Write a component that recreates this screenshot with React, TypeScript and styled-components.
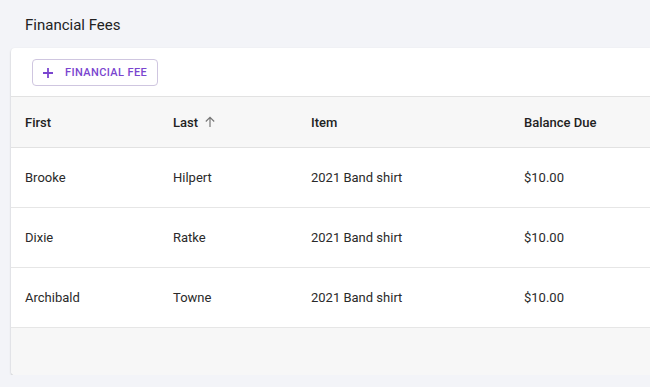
import styled, { createGlobalStyle } from "styled-components";

const rows = [
  { first: "Brooke", last: "Hilpert", item: "2021 Band shirt", due: "$10.00" },
  { first: "Dixie", last: "Ratke", item: "2021 Band shirt", due: "$10.00" },
  { first: "Archibald", last: "Towne", item: "2021 Band shirt", due: "$10.00" },
];

const GlobalStyle = createGlobalStyle`
  html, body {
    margin: 0;
    background: #f3f4f8;
    overflow: hidden;
  }
  body {
    font-family: Roboto, "Liberation Sans", sans-serif;
    color: #222;
  }
`;

export default function App() {
  return (
    <Page>
      <GlobalStyle />
      <Title>Financial Fees</Title>
      <Card>
        <Toolbar>
          <AddButton>
            <svg width="12" height="12" viewBox="0 0 12 12">
              <path d="M6 1v10M1 6h10" stroke="currentColor" strokeWidth="1.8" />
            </svg>
            Financial Fee
          </AddButton>
        </Toolbar>
        <HeaderRow>
          <Cell>First</Cell>
          <Cell>
            Last
            <svg width="12" height="12" viewBox="0 0 12 12">
              <path d="M6 11V1.5M1.8 5.5L6 1.3l4.2 4.2" stroke="#777" strokeWidth="1.2" fill="none" />
            </svg>
          </Cell>
          <Cell>Item</Cell>
          <Cell>Balance Due</Cell>
        </HeaderRow>
        {rows.map((r) => (
          <Row key={r.first}>
            <Cell>{r.first}</Cell>
            <Cell>{r.last}</Cell>
            <Cell>{r.item}</Cell>
            <Cell>{r.due}</Cell>
          </Row>
        ))}
        <Footer />
      </Card>
    </Page>
  );
}

const Page = styled.div`
  padding: 15px 0 0 11px;
`;

const Title = styled.div`
  font-size: 15px;
  padding-left: 14px;
  height: 20px;
  line-height: 20px;
  margin-bottom: 13px;
`;

const Card = styled.div`
  background: #fff;
  border-radius: 4px 0 0 4px;
  box-shadow: 0 1px 2px rgba(0, 0, 0, 0.25);
  overflow: hidden;
`;

const Toolbar = styled.div`
  height: 49px;
  padding: 11px 0 0 21px;
  box-sizing: border-box;
  border-bottom: 1px solid #e2e2e2;
`;

const AddButton = styled.button`
  display: inline-flex;
  align-items: center;
  gap: 11px;
  height: 27px;
  width: 126px;
  padding: 0 0 0 9px;
  box-sizing: border-box;
  background: #fff;
  border: 1px solid #cfc6e0;
  border-radius: 4px;
  color: #7a45cf;
  font-family: Roboto, "Liberation Sans", sans-serif;
  font-size: 11px;
  font-weight: 500;
  letter-spacing: 0.4px;
  text-transform: uppercase;
  white-space: nowrap;
`;

const grid = `
  display: grid;
  grid-template-columns: 148px 138px 213px 1fr;
  align-items: center;
  padding-left: 14px;
  font-size: 13px;
`;

const HeaderRow = styled.div`
  ${grid}
  height: 51px;
  background: #f7f7f7;
  font-weight: 500;
  color: #222;
  border-bottom: 1px solid #e2e2e2;
  box-sizing: border-box;
`;

const Row = styled.div`
  ${grid}
  height: 60px;
  color: #2a2a2a;
  border-bottom: 1px solid #e6e6e6;
  box-sizing: border-box;
`;

const Cell = styled.div`
  display: flex;
  align-items: center;
  gap: 6px;
`;

const Footer = styled.div`
  height: 47px;
  background: #f7f7f7;
`;
